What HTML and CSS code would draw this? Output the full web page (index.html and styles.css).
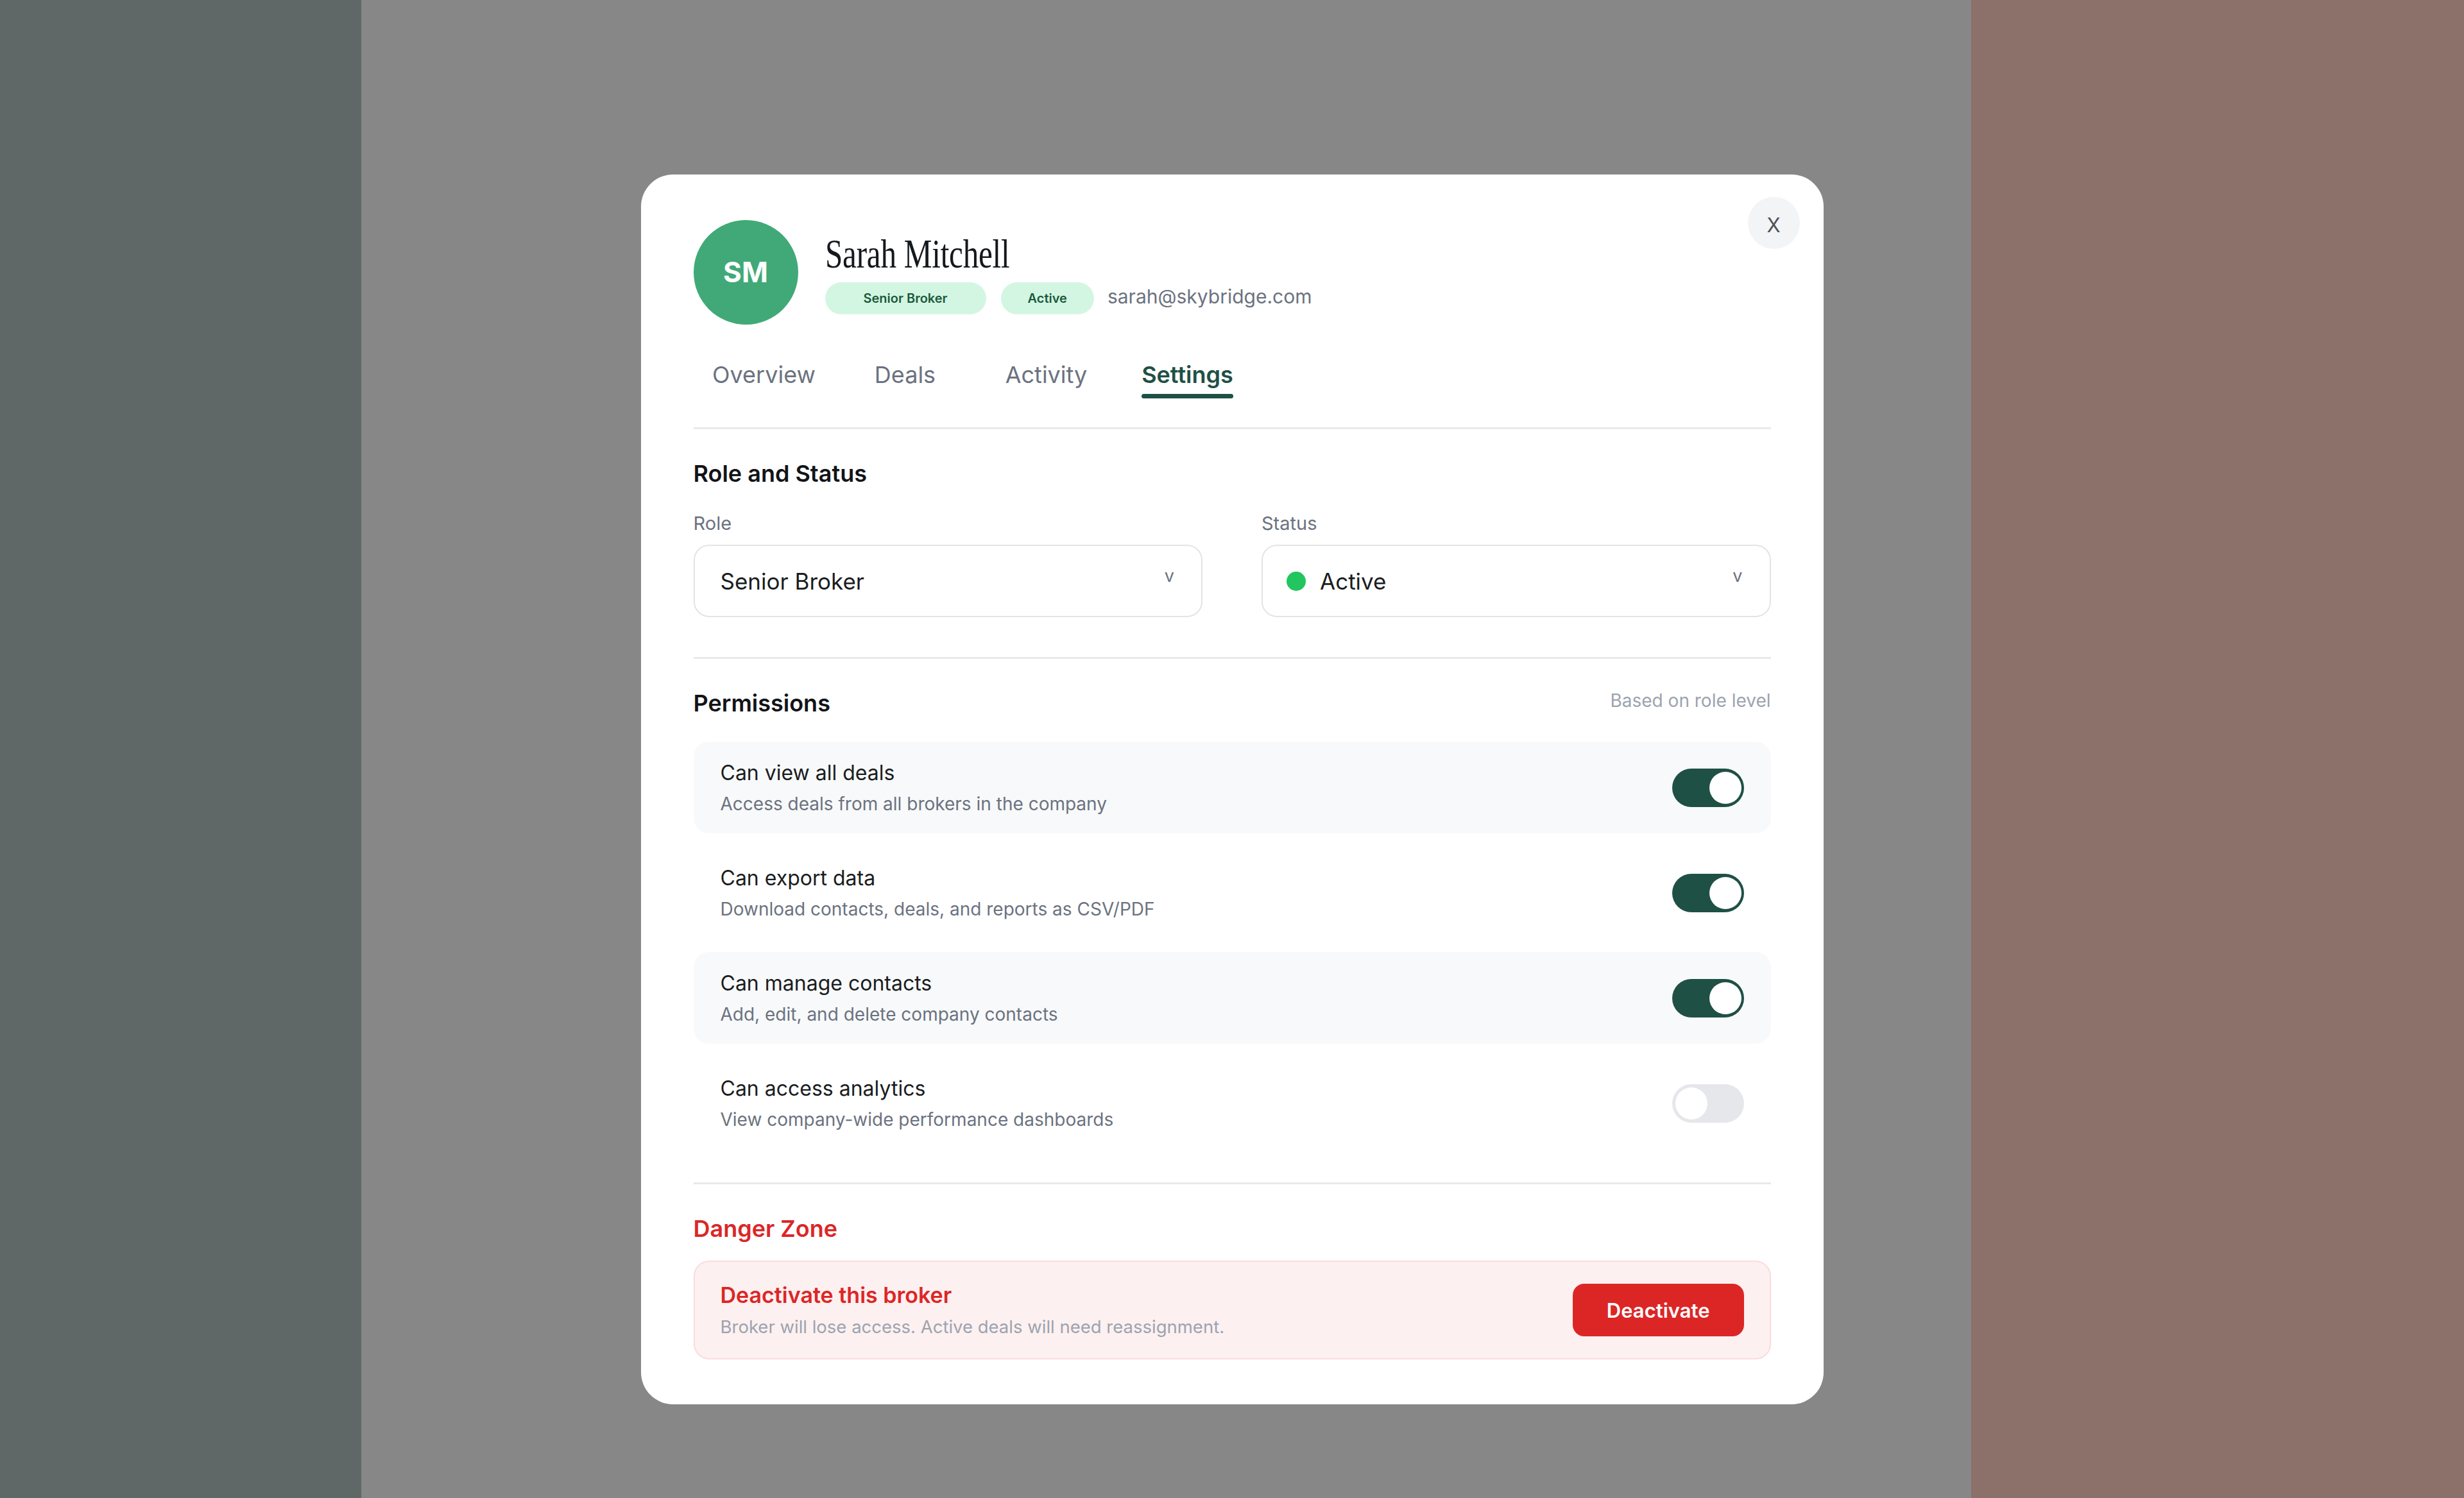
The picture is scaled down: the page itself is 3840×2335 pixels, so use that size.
FILE: index.html
```html
<!DOCTYPE html>
<html lang="en">
<head>
    <meta charset="UTF-8">
    <meta name="viewport" content="width=device-width, initial-scale=1.0">
    <title>Broker Settings</title>
    <link rel="stylesheet" href="styles.css">
</head>
<body>

    <div class="app">
        <aside class="app-sidebar"></aside>
        <main class="app-main"></main>
        <aside class="app-panel"></aside>
    </div>

    <div class="overlay">
        <div class="modal">
            <button class="close-btn">X</button>

            <div class="profile">
                <div class="avatar">SM</div>
                <div class="profile-info">
                    <h1 class="profile-name"><span>Sarah Mitchell</span></h1>
                    <div class="profile-meta">
                        <span class="badge badge-role">Senior Broker</span>
                        <span class="badge badge-status">Active</span>
                        <span class="profile-email">sarah@skybridge.com</span>
                    </div>
                </div>
            </div>

            <nav class="tabs">
                <div class="tab"><span>Overview</span></div>
                <div class="tab"><span>Deals</span></div>
                <div class="tab"><span>Activity</span></div>
                <div class="tab active"><span>Settings</span></div>
            </nav>

            <section class="section section-role">
                <h2 class="section-title">Role and Status</h2>
                <div class="field-grid">
                    <div class="field">
                        <label class="field-label">Role</label>
                        <div class="select">
                            <span class="select-value">Senior Broker</span>
                            <span class="select-arrow">v</span>
                        </div>
                    </div>
                    <div class="field">
                        <label class="field-label">Status</label>
                        <div class="select">
                            <span class="select-value"><i class="status-dot"></i>Active</span>
                            <span class="select-arrow">v</span>
                        </div>
                    </div>
                </div>
            </section>

            <section class="section section-perms">
                <div class="section-head">
                    <h2 class="section-title">Permissions</h2>
                    <span class="section-hint">Based on role level</span>
                </div>
                <div class="perm-list">
                    <div class="perm-row shaded">
                        <div class="perm-text">
                            <div class="perm-title">Can view all deals</div>
                            <div class="perm-desc">Access deals from all brokers in the company</div>
                        </div>
                        <div class="toggle on"><span class="knob"></span></div>
                    </div>
                    <div class="perm-row">
                        <div class="perm-text">
                            <div class="perm-title">Can export data</div>
                            <div class="perm-desc">Download contacts, deals, and reports as CSV/PDF</div>
                        </div>
                        <div class="toggle on"><span class="knob"></span></div>
                    </div>
                    <div class="perm-row shaded">
                        <div class="perm-text">
                            <div class="perm-title">Can manage contacts</div>
                            <div class="perm-desc">Add, edit, and delete company contacts</div>
                        </div>
                        <div class="toggle on"><span class="knob"></span></div>
                    </div>
                    <div class="perm-row">
                        <div class="perm-text">
                            <div class="perm-title">Can access analytics</div>
                            <div class="perm-desc">View company-wide performance dashboards</div>
                        </div>
                        <div class="toggle"><span class="knob"></span></div>
                    </div>
                </div>
            </section>

            <section class="section section-danger">
                <h2 class="section-title danger">Danger Zone</h2>
                <div class="danger-box">
                    <div class="danger-text">
                        <div class="danger-title">Deactivate this broker</div>
                        <div class="danger-desc">Broker will lose access. Active deals will need reassignment.</div>
                    </div>
                    <button class="danger-btn">Deactivate</button>
                </div>
            </section>
        </div>
    </div>

</body>
</html>
```

FILE: styles.css
```css
:root {
    --verde-escuro: #1f5045;
    --verde-avatar: #41a978;
    --texto: #1a1d21;
    --texto-suave: #6b7280;
    --texto-claro: #9ca3af;
    --linha: #e8e9eb;
    --vermelho: #dc2626;
}

* { box-sizing: border-box; }

html, body { height: 100%; }

body {
    margin: 0;
    font-family: 'Inter', 'Liberation Sans', sans-serif;
    color: var(--texto);
    overflow: hidden;
}

.app {
    display: grid;
    grid-template-columns: 563px 1fr 768px;
    height: 100%;
}
.app-sidebar { background-color: #5f6866; }
.app-main { background-color: #878787; }
.app-panel { background-color: #8b716a; }

.overlay {
    position: fixed;
    inset: 0;
    display: flex;
    justify-content: center;
    align-items: flex-start;
    padding-top: 272px;
}

.modal {
    position: relative;
    width: 1843px;
    background: #ffffff;
    border-radius: 50px;
    padding: 71px 82px 70px 82px;
}

.close-btn {
    position: absolute;
    top: 35px;
    right: 37px;
    width: 81px;
    height: 81px;
    border: none;
    border-radius: 50%;
    background-color: #f3f4f5;
    color: #4b5058;
    font-family: 'Inter', sans-serif;
    font-size: 31px;
    display: flex;
    align-items: center;
    justify-content: center;
    padding: 6px 0 0 0;
}

/* --- cabeçalho do perfil --- */
.profile { display: flex; align-items: center; gap: 42px; }

.avatar {
    width: 163px;
    height: 163px;
    flex-shrink: 0;
    border-radius: 50%;
    background-color: var(--verde-avatar);
    color: #fff;
    font-size: 44px;
    font-weight: 700;
    display: flex;
    align-items: center;
    justify-content: center;
    padding-bottom: 2px;
}

.profile-info { display: flex; flex-direction: column; gap: 13px; padding-top: 6px; }

.profile-name {
    margin: 0;
    font-family: 'Liberation Serif', serif;
    font-weight: 400;
    font-size: 63px;
    line-height: 62px;
    color: #15181c;
}
.profile-name span { display: inline-block; transform: scaleX(0.78); transform-origin: left center; letter-spacing: -0.3px; }

.profile-meta { display: flex; align-items: center; gap: 23px; }

.badge {
    height: 50px;
    border-radius: 25px;
    background-color: #d3f6e3;
    color: #1c5a3c;
    font-size: 20px;
    font-weight: 600;
    display: inline-flex;
    align-items: center;
}
.badge-role { padding: 0 60px; }
.badge-status { padding: 0 42px; }

.profile-email { font-size: 30px; color: var(--texto-suave); margin-left: -2px; margin-bottom: 7px; }

/* --- abas --- */
.tabs {
    display: flex;
    margin-top: 56px;
    padding-bottom: 45px;
    border-bottom: 3px solid var(--linha);
}

.tab {
    width: 220px;
    display: flex;
    justify-content: center;
    font-size: 36px;
    line-height: 44px;
    color: var(--texto-suave);
}
.tab span { display: flex; flex-direction: column; }
.tab span::after {
    content: '';
    height: 7px;
    margin-top: 8px;
    border-radius: 4px;
    background: transparent;
}
.tab.active { color: var(--verde-escuro); font-weight: 600; }
.tab.active span::after { background: var(--verde-escuro); }

/* --- seções --- */
.section { padding-top: 49px; }
.section-role { padding-bottom: 62px; border-bottom: 3px solid var(--linha); }
.section-perms { padding-bottom: 52px; border-bottom: 3px solid var(--linha); }

.section-title {
    margin: 0;
    font-size: 36px;
    line-height: 40px;
    font-weight: 600;
    color: #121418;
}
.section-title.danger { color: var(--vermelho); }

.section-head { display: flex; justify-content: space-between; align-items: center; margin-bottom: 40px; }
.section-hint { font-size: 28px; color: var(--texto-claro); margin-top: -8px; }

.field-grid { display: grid; grid-template-columns: 1fr 1fr; gap: 92px; margin-top: 41px; }

.field-label {
    display: block;
    font-size: 29px;
    line-height: 34px;
    color: var(--texto-suave);
    margin-bottom: 16px;
}

.select {
    height: 113px;
    border: 2px solid #e3e4e6;
    border-radius: 24px;
    padding: 0 42px 0 40px;
    display: flex;
    align-items: center;
    justify-content: space-between;
}
.select-value { display: flex; align-items: center; gap: 22px; font-size: 35px; color: var(--texto); }
.select-arrow { font-size: 27px; color: var(--texto-suave); margin-bottom: 16px; }

.status-dot {
    width: 30px;
    height: 30px;
    border-radius: 50%;
    background-color: #22c55e;
    margin-left: -3px;
}

/* --- permissões --- */
.perm-list { display: flex; flex-direction: column; gap: 21px; }

.perm-row {
    height: 143px;
    border-radius: 24px;
    padding: 0 42px;
    display: flex;
    align-items: center;
    justify-content: space-between;
}
.perm-row.shaded { background-color: #f8f9fa; }

.perm-title { font-size: 32px; line-height: 38px; color: var(--texto); }
.perm-desc { font-size: 28px; line-height: 32px; color: var(--texto-suave); margin-top: 13px; }

.toggle {
    width: 112px;
    height: 60px;
    border-radius: 30px;
    background-color: #e5e7eb;
    padding: 5px;
    display: flex;
    justify-content: flex-start;
}
.toggle.on { background-color: var(--verde-escuro); justify-content: flex-end; padding-right: 4px; }
.knob { width: 50px; height: 50px; border-radius: 50%; background: #fff; }

/* --- zona de perigo --- */
.danger-box {
    margin-top: 30px;
    height: 154px;
    border: 2px solid #fadcdc;
    background-color: #fdf0f0;
    border-radius: 24px;
    padding: 0 40px;
    display: flex;
    align-items: center;
    justify-content: space-between;
}
.danger-title { font-size: 34px; line-height: 38px; font-weight: 600; color: var(--vermelho); }
.danger-desc { font-size: 27.5px; line-height: 32px; color: var(--texto-claro); margin-top: 14px; }

.danger-btn {
    height: 82px;
    padding: 0 53px;
    border: none;
    border-radius: 18px;
    background-color: var(--vermelho);
    color: #fff;
    font-family: 'Inter', sans-serif;
    font-size: 31px;
    font-weight: 600;
}
```
